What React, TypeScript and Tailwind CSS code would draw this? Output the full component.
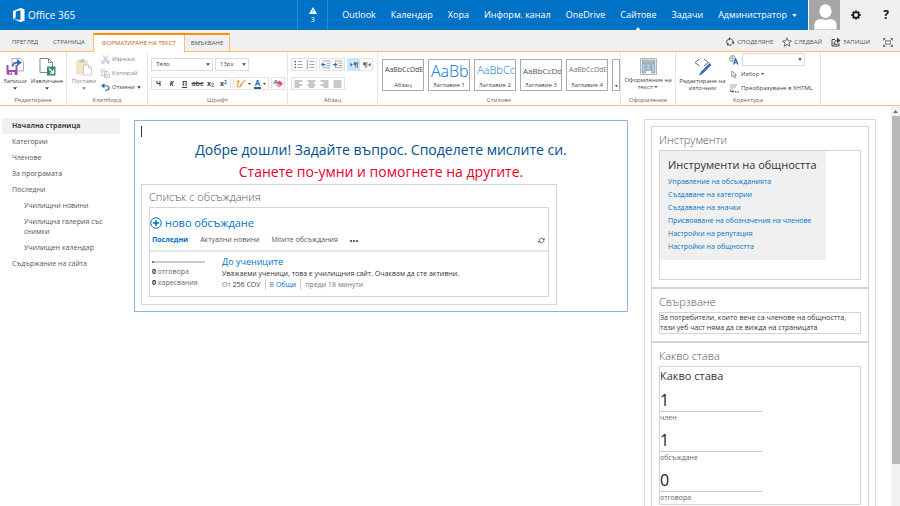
import type { ReactNode } from "react";
import clsx from "clsx";

const navItems = ["Outlook", "Календар", "Хора", "Информ. канал", "OneDrive", "Сайтове", "Задачи"];

const sideLinks = [
  { label: "Начална страница", active: true },
  { label: "Категории" },
  { label: "Членове" },
  { label: "За програмата" },
  { label: "Последни" },
  { label: "Училищни новини", nested: true },
  { label: "Училищна галерия със снимки", nested: true },
  { label: "Училищен календар", nested: true },
  { label: "Съдържание на сайта" },
];

const textStyles = [
  { name: "Абзац", sample: "AaBbCcDdE", look: "text-[7px] text-[#444]" },
  { name: "Заглавие 1", sample: "AaBb", look: "text-[16px] font-light text-[#0072c6]" },
  { name: "Заглавие 2", sample: "AaBbCc", look: "text-[11px] font-light text-[#0072c6]" },
  { name: "Заглавие 3", sample: "AaBbCcDd", look: "text-[8px] text-[#555]" },
  { name: "Заглавие 4", sample: "AaBbCcDdE", look: "text-[7px] text-[#777]" },
];

const toolLinks = [
  "Управление на обсъжданията",
  "Създаване на категории",
  "Създаване на значки",
  "Присвояване на обозначения на членове",
  "Настройки на репутация",
  "Настройки на общността",
];

const stats = [
  { value: 1, label: "член" },
  { value: 1, label: "обсъждане" },
  { value: 0, label: "отговора" },
];

function Caret({ className }: { className?: string }) {
  return (
    <svg viewBox="0 0 6 4" className={clsx("shrink-0", className ?? "h-[3px] w-[4px]")} aria-hidden="true">
      <path d="M0 0h6L3 4z" fill="currentColor" />
    </svg>
  );
}

function OfficeLogo() {
  return (
    <svg viewBox="0 0 24 28" className="h-[14px] w-[12px]" aria-hidden="true">
      <path d="M0 6 15 0l8 2.5v23L15 28 0 22l15 2V4.6L5.4 7v12.4L0 22z" fill="#fff" />
    </svg>
  );
}

function Avatar() {
  return (
    <svg viewBox="0 0 32 30" className="h-[30px] w-[32px] border-l border-white bg-[#a6a6a6]" role="img" aria-label="Администратор">
      <ellipse cx="17" cy="11" rx="6.3" ry="7" fill="#fff" />
      <path d="M5.500 30v-4q0-7 7-7h1q3.500 2 7 0h1q7 0 7 7v4z" fill="#fff" />
    </svg>
  );
}

function GearIcon() {
  return (
    <svg viewBox="0 0 20 20" className="h-[10px] w-[10px]" aria-hidden="true">
      <circle cx="10" cy="10" r="5.600" fill="none" stroke="#111" strokeWidth="3" />
      <g stroke="#111" strokeWidth="3.600">
        <path d="M10 .8v3M10 16.200v3M.8 10h3M16.200 10h3M3.500 3.500l2.100 2.100M14.400 14.400l2.100 2.100M3.500 16.500l2.100-2.100M14.400 5.600l2.100-2.100" />
      </g>
    </svg>
  );
}

function CycleIcon({ className }: { className: string }) {
  return (
    <svg viewBox="0 0 20 20" className={className} fill="none" stroke="#444" strokeWidth="2" aria-hidden="true">
      <path d="M4 12.500A6.500 6.500 0 0 1 9 3.600M12.500 4A6.500 6.500 0 0 1 16 12M13.500 15.600a6.500 6.500 0 0 1-7.500-.5" />
      <path d="m8 .5 4 3-4 3.500zM19 10l-2.500 5L13 11zM7.500 12.500 3 13l2.500 5z" fill="#444" stroke="none" />
    </svg>
  );
}

function RefreshIcon() {
  return (
    <svg viewBox="0 0 16 16" className="h-[7px] w-[7px]" fill="none" stroke="#444" strokeWidth="1.600" aria-hidden="true">
      <path d="M2.500 9A5.500 5 0 0 1 12 4.500M13.500 7A5.500 5 0 0 1 4 11.500" />
      <path d="M15 2v5h-5zM1 14V9h5z" fill="#444" stroke="none" />
    </svg>
  );
}

function StarIcon() {
  return (
    <svg viewBox="0 0 20 20" className="h-[10px] w-[10px]" fill="none" stroke="#444" strokeWidth="1.500" aria-hidden="true">
      <path d="m10 1.500 2.400 6.200 6.600.3-5.200 4.100 1.800 6.400-5.600-3.700-5.600 3.700 1.800-6.400L1 8l6.600-.3z" />
    </svg>
  );
}

function SyncIcon() {
  return (
    <svg viewBox="0 0 20 20" className="h-[10px] w-[10px]" fill="none" stroke="#444" strokeWidth="2" aria-hidden="true">
      <path d="M8 5H2v13h14v-6M6 14c0-5 3-7 7-7" />
      <path d="m12 1 7 6-7 6z" fill="#444" stroke="none" />
      <path d="M5 14.500h8" />
    </svg>
  );
}

function FocusIcon() {
  return (
    <svg viewBox="0 0 20 18" className="h-[9px] w-[10px]" fill="none" stroke="#555" strokeWidth="1.500" aria-hidden="true">
      <path d="M5.500 5.500h9v7h-9zM1 5V1h4M15 1h4v4M19 13v4h-4M5 17H1v-4" />
      <path d="m1 1 4 4M19 1l-4 4M19 17l-4-4M1 17l4-4" />
    </svg>
  );
}

function SaveIcon() {
  return (
    <svg viewBox="0 0 36 36" className="h-[18px] w-[18px]" aria-hidden="true">
      <path d="M12 1h17l6 6v19H12z" fill="#fff" stroke="#999" strokeWidth="1.500" />
      <path d="M1 14h22v20H4l-3-3z" fill="#9b4fb5" />
      <path d="M5 14h14v10H5zM7 28h10v6H7z" fill="#fff" />
      <path d="M9 29h3v5H9z" fill="#9b4fb5" />
      <path d="M11 17q1-9 11-10V2l10 7-10 7v-5q-6 0-7 6z" fill="#2f70b8" />
    </svg>
  );
}

function CheckOutIcon() {
  return (
    <svg viewBox="0 0 34 36" className="h-[18px] w-[17px]" aria-hidden="true">
      <path d="M2 1h17l8 8v20H2z" fill="#fff" stroke="#777" strokeWidth="1.800" />
      <path d="M19 1v8h8" fill="none" stroke="#777" strokeWidth="1.800" />
      <path d="M16 17h17v18H16z" fill="#39876b" />
      <path d="m20 21 8 8m1-6v7h-7" fill="none" stroke="#fff" strokeWidth="2.500" />
    </svg>
  );
}

function PasteIcon() {
  return (
    <svg viewBox="0 0 36 36" className="h-[18px] w-[18px]" aria-hidden="true">
      <path d="M2 5h24v28H2z" fill="#f4e3c3" />
      <path d="M8 3h3q3-4 6 0h3v6H8z" fill="#c9c9c9" />
      <path d="M17 14h10l6 6v14H17z" fill="#fff" stroke="#bbb" strokeWidth="1.500" />
      <path d="M27 14v6h6" fill="none" stroke="#bbb" strokeWidth="1.500" />
    </svg>
  );
}

function CutIcon() {
  return (
    <svg viewBox="0 0 18 18" className="h-[9px] w-[9px]" fill="none" aria-hidden="true">
      <path d="M4 1l8 11M14 1 6 12" stroke="#aaa" strokeWidth="1.800" />
      <circle cx="4" cy="14" r="2.700" stroke="#8fb4dc" strokeWidth="1.600" />
      <circle cx="14" cy="14" r="2.700" stroke="#8fb4dc" strokeWidth="1.600" />
    </svg>
  );
}

function CopyIcon() {
  return (
    <svg viewBox="0 0 18 18" className="h-[9px] w-[9px]" fill="#fff" stroke="#b0b0b0" strokeWidth="1.300" aria-hidden="true">
      <path d="M1 1h6l3 3v9H1zM7 5h6l4 4v8H7z" />
      <path d="M9 11h6M9 14h6M3 5h3M3 8h3" stroke="#a9c4e4" />
    </svg>
  );
}

function UndoIcon() {
  return (
    <svg viewBox="0 0 18 16" className="h-[8px] w-[9px]" fill="none" aria-hidden="true">
      <path d="M3 5.500h8q5 0 5 4t-5 5H8" stroke="#2f70b8" strokeWidth="2.400" />
      <path d="M7 0 0 5.500 7 11z" fill="#2f70b8" />
    </svg>
  );
}

function HighlightIcon() {
  return (
    <svg viewBox="0 0 20 18" className="h-[9px] w-[10px]" fill="none" aria-hidden="true">
      <path d="M1 6q6-5 5-1T2 12q0 4 4 4t6-4" stroke="#f0a345" strokeWidth="2.200" />
      <path d="m18 1 1 2-9 10-3 1 1-3z" fill="#e09a4a" />
    </svg>
  );
}

function EraserIcon() {
  return (
    <svg viewBox="0 0 20 18" className="h-[9px] w-[10px]" aria-hidden="true">
      <path d="m1 10 5-8 5 8M3 7h6" fill="none" stroke="#666" strokeWidth="1.800" />
      <path d="m13 3 7 6-8 8-7-6z" fill="#e0526a" />
      <path d="m8.500 8.500 6 5-2.500 2.500-6-5z" fill="#f5b7c1" />
    </svg>
  );
}

function ListIcon({ numbered }: { numbered?: boolean }) {
  return (
    <svg viewBox="0 0 18 18" className="h-[9px] w-[9px]" aria-hidden="true">
      <path d="M7 3h10M7 9h10M7 15h10" stroke="#888" strokeWidth="1.500" />
      {numbered ? (
        <path d="M2.500 0v5M2.500 6.500v5M2.500 13v5" stroke="#2f70b8" strokeWidth="1.500" />
      ) : (
        <path d="M1 1.500h3v3H1zM1 7.500h3v3H1zM1 13.500h3v3H1z" fill="#2f70b8" />
      )}
    </svg>
  );
}

function IndentIcon({ out }: { out?: boolean }) {
  return (
    <svg viewBox="0 0 20 18" className="h-[9px] w-[10px]" aria-hidden="true">
      <path d="M3 2h16M11 6.500h8M11 11h8M3 15.500h16" stroke="#888" strokeWidth="1.500" />
      <path d={out ? "M0 9l5-4.500V8h4v2.500H5V14z" : "M9 9 4 4.500V8H0v2.500h4V14z"} fill="#2f70b8" />
    </svg>
  );
}

function DirectionIcon({ rtl }: { rtl?: boolean }) {
  return (
    <svg viewBox="0 0 20 18" className="h-[8px] w-[9px]" aria-hidden="true">
      <path d={rtl ? "M19 4v9l-5-4.500z" : "M1 4v9l5-4.500z"} fill="#1f5fa8" />
      <path d={rtl ? "M7 4v11M10.500 4v11M3 4h9" : "M13 4v11M16.500 4v11M9 4h10"} stroke="#555" strokeWidth="1.600" fill="none" />
      <circle cx={rtl ? 5 : 11} cy="6.500" r="2.800" fill="#555" />
    </svg>
  );
}

const alignPaths = {
  left: "M1 2h16M1 6h10M1 10h16M1 14h10",
  center: "M1 2h16M4 6h10M1 10h16M4 14h10",
  right: "M1 2h16M7 6h10M1 10h16M7 14h10",
  justify: "M1 2h16M1 6h16M1 10h16M1 14h16",
};

function AlignIcon({ kind }: { kind: keyof typeof alignPaths }) {
  return (
    <svg viewBox="0 0 18 16" className="h-[8px] w-[9px]" aria-hidden="true">
      <path d={alignPaths[kind]} stroke="#777" strokeWidth="1.600" />
    </svg>
  );
}

function LayoutIcon() {
  return (
    <svg viewBox="0 0 34 34" className="h-[17px] w-[17px]" aria-hidden="true">
      <path d="M1 1h32v32H1z" fill="#fff" stroke="#999" strokeWidth="1.500" />
      <path d="M4 4h26v5H4zM4 11h7v19H4zM13 11h8v14h-8zM23 11h7v19h-7z" fill="#a9c6df" stroke="#777" />
    </svg>
  );
}

function SourceIcon() {
  return (
    <svg viewBox="0 0 36 36" className="h-[18px] w-[18px]" fill="none" aria-hidden="true">
      <path d="M11 2 2 9l9 7M20 2l9 7-9 7" stroke="#666" strokeWidth="2" />
      <path d="m33 12-18 18" stroke="#2f70b8" strokeWidth="5" />
      <path d="m13 28 4 4-7 3z" fill="#2f70b8" />
    </svg>
  );
}

function LanguageIcon() {
  return (
    <svg viewBox="0 0 20 20" className="h-[10px] w-[10px]" fill="none" aria-hidden="true">
      <circle cx="7" cy="7" r="6" stroke="#888" strokeWidth="1.500" />
      <path d="M1 7h12M7 1v12M3 4h8M3 10h8" stroke="#888" />
      <path d="m9 19 4.500-11L18 19M11 15.500h5" stroke="#1f5fa8" strokeWidth="2.200" />
    </svg>
  );
}

function CursorIcon() {
  return (
    <svg viewBox="0 0 14 18" className="mx-[2px] h-[9px] w-[6px]" aria-hidden="true">
      <path d="M2 1v13l3.500-3L8 17l3-1.500L8.500 10H13z" fill="#fff" stroke="#555" strokeWidth="1.500" />
    </svg>
  );
}

function ConvertIcon() {
  return (
    <svg viewBox="0 0 20 18" className="h-[9px] w-[10px]" aria-hidden="true">
      <path d="M2 2h14M2 6h12M2 10h6" stroke="#999" strokeWidth="1.800" />
      <path d="M3 12v3h5" stroke="#2f70b8" strokeWidth="2" fill="none" />
      <path d="m7 12 4 3-4 3z" fill="#2f70b8" />
      <path d="M12 16h2M15 16h2M18 16h2" stroke="#333" strokeWidth="2" />
    </svg>
  );
}

function RibbonGroup({ label, className, children }: { label: string; className?: string; children: ReactNode }) {
  return (
    <section className={clsx("flex shrink-0 flex-col border-r border-[#e6e6e6]", className)}>
      <div className="flex h-[43px] items-start">{children}</div>
      <h2 className="text-center text-[6px] leading-[10px] text-[#666]">{label}</h2>
    </section>
  );
}

function BigButton({ icon, children, className }: { icon: ReactNode; children: ReactNode; className?: string }) {
  return (
    <button type="button" className={clsx("mt-[6px] flex flex-col items-center gap-[2px] text-[6px] leading-[7px]", className)}>
      {icon}
      {children}
    </button>
  );
}

function SmallButton({ icon, children, disabled }: { icon: ReactNode; children: ReactNode; disabled?: boolean }) {
  return (
    <button
      type="button"
      disabled={disabled}
      className={clsx("flex h-[14px] items-center gap-[2px] whitespace-nowrap text-[6px]", disabled && "text-[#888]")}
    >
      {icon}
      {children}
    </button>
  );
}

function ToolBox({ children }: { children: ReactNode }) {
  return <div className="flex h-[13px] items-stretch border border-[#e1e1e1]">{children}</div>;
}

function Tool({ label, className, pressed, children }: { label: string; className?: string; pressed?: boolean; children: ReactNode }) {
  return (
    <button
      type="button"
      aria-label={label}
      className={clsx(
        "flex min-w-[12px] items-center justify-center gap-[2px] text-[7px] leading-none",
        pressed && "bg-[#cde6f7]",
        className
      )}
    >
      {children}
    </button>
  );
}

function Picker({ label, options, className }: { label: string; options: string[]; className: string }) {
  return (
    <div className={clsx("relative h-[13px]", className)}>
      <select aria-label={label} className="block h-full w-full appearance-none border border-[#dcdcdc] bg-white pl-[4px] text-[6px]">
        {options.map((o) => (
          <option key={o}>{o}</option>
        ))}
      </select>
      <Caret className="pointer-events-none absolute top-[5px] right-[3px] h-[3px] w-[4px]" />
    </div>
  );
}

function Header() {
  return (
    <header className="flex h-[30px] shrink-0 items-stretch bg-[#0072c6] text-white">
      <a href="#" className="flex flex-1 items-center gap-[3px] pl-[13px] text-[10px] font-medium">
        <OfficeLogo />
        Office 365
      </a>
      <button type="button" aria-label="Известия" className="flex w-[31px] flex-col items-center justify-center gap-[2px] border-x border-[#2a8ad4] text-[7px] leading-[8px]">
        <svg viewBox="0 0 16 14" className="h-[7px] w-[8px]" aria-hidden="true">
          <path d="M8 0l8 14H0z" fill="#fff" />
          <path d="M8 5v4M8 10.500v2" stroke="#0072c6" strokeWidth="1.500" />
        </svg>
        3
      </button>
      <nav className="flex items-stretch gap-[15px] pl-[14px] text-[9px]">
        {navItems.map((item) => (
          <a key={item} href="#" className="relative flex items-center">
            {item}
            {item === "Сайтове" && (
              <Caret className="absolute bottom-0 left-1/2 h-[3px] w-[6px] -translate-x-1/2 rotate-180" />
            )}
          </a>
        ))}
        <button type="button" className="flex items-center gap-[5px] pr-[11px]">
          Администратор
          <Caret className="h-[3px] w-[5px]" />
        </button>
      </nav>
      <Avatar />
      <div className="flex w-[60px] items-center justify-around bg-[#f0f0f0] text-[#111]">
        <button type="button" aria-label="Настройки">
          <GearIcon />
        </button>
        <button type="button" aria-label="Помощ" className="text-[12px] font-bold">
          ?
        </button>
      </div>
    </header>
  );
}

function TabBar() {
  return (
    <div className="flex h-[22px] shrink-0 items-stretch border-b border-[#fdbf6d] bg-[#f0f0f0] pt-[3px] text-[6px] text-[#555]">
      <button type="button" className="pr-[7px] pl-[12px]">ПРЕГЛЕД</button>
      <button type="button" className="px-[8px]">СТРАНИЦА</button>
      <div className="-mb-px flex items-stretch border-x border-t-2 border-[#fdbf6d] border-t-[#ff8f00]">
        <button type="button" className="bg-white px-[8px] text-[#c55a1d]">ФОРМАТИРАНЕ НА ТЕКСТ</button>
        <button type="button" className="mb-px border-l border-[#fdbf6d] px-[6px]">ВМЪКВАНЕ</button>
      </div>
      <div className="ml-auto flex items-center gap-[9px] pr-[7px]">
        <button type="button" className="flex items-center gap-[2px]">
          <CycleIcon className="h-[10px] w-[10px]" />
          СПОДЕЛЯНЕ
        </button>
        <button type="button" className="flex items-center gap-[2px]">
          <StarIcon />
          СЛЕДВАЙ
        </button>
        <button type="button" className="flex items-center gap-[2px]">
          <SyncIcon />
          ЗАПИШИ
        </button>
        <button type="button" aria-label="Фокус върху съдържанието" className="ml-[4px]">
          <FocusIcon />
        </button>
      </div>
    </div>
  );
}

function Ribbon() {
  return (
    <div className="flex h-[54px] shrink-0 border-b border-[#fdbf6d] bg-white text-[#444]">
      <RibbonGroup label="Редактиране" className="w-[67px]">
        <BigButton icon={<SaveIcon />} className="w-[30px]">
          Запиши
          <Caret />
        </BigButton>
        <BigButton icon={<CheckOutIcon />} className="w-[34px]">
          Извличане
          <Caret />
        </BigButton>
      </RibbonGroup>

      <RibbonGroup label="Клипборд" className="w-[81px]">
        <BigButton icon={<PasteIcon />} className="w-[34px] text-[#888]">
          Постави
          <Caret />
        </BigButton>
        <div>
          <SmallButton icon={<CutIcon />} disabled>Изрежи</SmallButton>
          <SmallButton icon={<CopyIcon />} disabled>Копирай</SmallButton>
          <SmallButton icon={<UndoIcon />}>
            Отмени
            <Caret />
          </SmallButton>
        </div>
      </RibbonGroup>

      <RibbonGroup label="Шрифт" className="w-[140px] px-[3px]">
        <div className="mt-[6px] flex flex-col gap-[6px]">
          <div className="flex gap-[2px]">
            <Picker label="Шрифт" options={["Тяло"]} className="w-[62px]" />
            <Picker label="Размер на шрифта" options={["13px"]} className="w-[34px]" />
          </div>
          <div className="flex gap-[2px]">
            <ToolBox>
              <Tool label="Получер" className="w-[13px] font-bold">Ч</Tool>
              <Tool label="Курсив" className="w-[13px] font-bold italic">К</Tool>
              <Tool label="Подчертан" className="w-[13px] font-bold underline">П</Tool>
              <Tool label="Зачертан" className="w-[13px] text-[6px] font-semibold line-through">abc</Tool>
              <Tool label="Долен индекс" className="w-[13px] font-bold">
                <span>x<sub className="text-[5px] text-[#2f70b8]">2</sub></span>
              </Tool>
              <Tool label="Горен индекс" className="w-[13px] font-bold">
                <span>x<sup className="text-[5px] text-[#2f70b8]">2</sup></span>
              </Tool>
            </ToolBox>
            <ToolBox>
              <Tool label="Цвят за осветяване" className="w-[18px]">
                <HighlightIcon />
                <Caret className="h-[2px] w-[3px]" />
              </Tool>
              <Tool label="Цвят на шрифта" className="w-[16px]">
                <span className="border-b-2 border-[#1f5fa8] px-[1px] text-[8px] leading-[8px] font-bold text-[#2f5f98]">A</span>
                <Caret className="h-[2px] w-[3px]" />
              </Tool>
            </ToolBox>
            <ToolBox>
              <Tool label="Изчистване на форматирането">
                <EraserIcon />
              </Tool>
            </ToolBox>
          </div>
        </div>
      </RibbonGroup>

      <RibbonGroup label="Абзац" className="w-[90px] px-[3px]">
        <div className="mt-[6px] flex flex-col items-start gap-[6px]">
          <div className="flex gap-[2px]">
            <ToolBox>
              <Tool label="Водещи символи"><ListIcon /></Tool>
              <Tool label="Номериране"><ListIcon numbered /></Tool>
            </ToolBox>
            <ToolBox>
              <Tool label="Намаляване на отстъпа"><IndentIcon out /></Tool>
              <Tool label="Увеличаване на отстъпа"><IndentIcon /></Tool>
            </ToolBox>
            <ToolBox>
              <Tool label="Отляво надясно" pressed><DirectionIcon /></Tool>
              <Tool label="Отдясно наляво"><DirectionIcon rtl /></Tool>
            </ToolBox>
          </div>
          <ToolBox>
            <Tool label="Подравняване отляво" className="w-[13px]"><AlignIcon kind="left" /></Tool>
            <Tool label="Центриране" className="w-[13px]"><AlignIcon kind="center" /></Tool>
            <Tool label="Подравняване отдясно" className="w-[13px]"><AlignIcon kind="right" /></Tool>
            <Tool label="Двустранно подравняване" className="w-[13px]"><AlignIcon kind="justify" /></Tool>
          </ToolBox>
        </div>
      </RibbonGroup>

      <RibbonGroup label="Стилове" className="w-[243px]">
        <div className="mt-[7px] flex gap-[4px] pl-[4px]">
          {textStyles.map((s) => (
            <button key={s.name} type="button" className="flex h-[32px] w-[42px] flex-col overflow-hidden border border-[#ababab]">
              <span className={clsx("flex h-[21px] items-center pl-[2px] whitespace-nowrap", s.look)}>{s.sample}</span>
              <span className="w-full text-center text-[6px] leading-[8px]">{s.name}</span>
            </button>
          ))}
          <button type="button" aria-label="Още стилове" className="flex h-[32px] w-[8px] items-end justify-center border border-[#ababab] pb-[3px]">
            <Caret className="h-[2px] w-[3px]" />
          </button>
        </div>
      </RibbonGroup>

      <RibbonGroup label="Оформление" className="w-[55px]">
        <BigButton icon={<LayoutIcon />} className="w-full">
          <span>
            Оформление на
            <br />
            текст <Caret className="inline h-[2px] w-[4px]" />
          </span>
        </BigButton>
      </RibbonGroup>

      <RibbonGroup label="Коректура" className="w-[145px]">
        <BigButton icon={<SourceIcon />} className="w-[53px]">
          <span>
            Редактиране на
            <br />
            източник
          </span>
        </BigButton>
        <div>
          <div className="flex h-[15px] items-center gap-[3px]">
            <LanguageIcon />
            <Picker label="Език" options={[""]} className="w-[63px]" />
          </div>
          <SmallButton icon={<CursorIcon />}>
            Избор
            <Caret className="h-[2px] w-[3px]" />
          </SmallButton>
          <SmallButton icon={<ConvertIcon />}>Преобразуване в XHTML</SmallButton>
        </div>
      </RibbonGroup>
    </div>
  );
}

function SideNav() {
  return (
    <nav className="w-[134px] shrink-0 pt-[12px] pr-[14px] pl-[2px] text-[7px] text-[#555]">
      <ul>
        {sideLinks.map((link) => (
          <li key={link.label}>
            <a
              href="#"
              className={clsx(
                "block py-[3px] leading-[10px]",
                link.nested ? "pl-[22px]" : "pl-[10px]",
                link.active && "bg-[#f0f0f0] font-bold text-[#444]"
              )}
            >
              {link.label}
            </a>
          </li>
        ))}
      </ul>
    </nav>
  );
}

function DiscussionList() {
  return (
    <section className="mt-px mr-[64px] border border-[#d4d4d4] px-[7px] pb-[7px]">
      <h2 className="pt-[3px] pb-px text-[11px] leading-[18px] font-light text-[#555]">Списък с обсъждания</h2>
      <div className="border border-[#d4d4d4]">
        <a href="#" className="flex items-center gap-[3px] pt-[7px] text-[11px] leading-[16px] text-[#0072c6]">
          <svg viewBox="0 0 24 24" className="h-[12px] w-[12px]" fill="none" stroke="#0072c6" strokeWidth="2" aria-hidden="true">
            <circle cx="12" cy="12" r="10.500" />
            <path d="M12 6v12M6 12h12" strokeWidth="3" />
          </svg>
          ново обсъждане
        </a>
        <div className="flex h-[21px] items-center gap-[12px] border-b-2 border-[#e4e4e4] pr-[3px] pl-[2px] text-[7px] text-[#555]">
          <a href="#" className="font-bold text-[#0072c6]">Последни</a>
          <a href="#">Актуални новини</a>
          <a href="#">Моите обсъждания</a>
          <button type="button" aria-label="Още" className="flex gap-[1px]">
            <span className="size-[2px] rounded-full bg-[#333]" />
            <span className="size-[2px] rounded-full bg-[#333]" />
            <span className="size-[2px] rounded-full bg-[#333]" />
          </button>
          <button type="button" aria-label="Обновяване" className="ml-auto">
            <RefreshIcon />
          </button>
        </div>
        <article className="flex pt-[4px] pb-[6px] pl-[2px] text-[7px] leading-[11px] text-[#333]">
          <div className="w-[70px] text-[#666]">
            <div className="mt-[5px] mb-[3px] h-[2px] w-[53px] border-l-2 border-[#777] bg-[#ccc]" />
            <p><b className="text-[#222]">0</b> отговора</p>
            <p><b className="text-[#222]">0</b> харесвания</p>
          </div>
          <div>
            <h3 className="text-[9px] leading-[12px]">
              <a href="#" className="text-[#0072c6]">До учениците</a>
            </h3>
            <p>Уважаеми ученици, това е училищния сайт. Очаквам да сте активни.</p>
            <p className="flex text-[#777]">
              <span className="border-r border-[#ccc] pr-[4px]">От <span className="text-[#444]">256 СОУ</span></span>
              <span className="border-r border-[#ccc] px-[4px]">В <a href="#" className="text-[#0072c6]">Общи</a></span>
              <span className="pl-[4px]">преди 18 минути</span>
            </p>
          </div>
        </article>
      </div>
    </section>
  );
}

function Editor() {
  return (
    <main className="mt-[14px] min-w-0 flex-1 self-start border border-[#8eb0e8] px-[6px] pt-[5px] pb-[6px]">
      <div className="mb-[2px] h-[11px] w-px bg-[#333]" />
      <div className="text-center text-[14px] leading-[22px]">
        <p className="text-[#00508f]">Добре дошли! Задайте въпрос. Споделете мислите си.</p>
        <p className="text-[#e6002e]">Станете по-умни и помогнете на другите.</p>
      </div>
      <DiscussionList />
    </main>
  );
}

function WebPart({ title, children }: { title: string; children: ReactNode }) {
  return (
    <section className="border-b-2 border-[#d4d4d4] px-[7px] pb-[7px] last:border-b-0">
      <h2 className="pt-[4px] text-[11px] leading-[18px] font-light text-[#555]">{title}</h2>
      <div className="mt-[1px] border border-[#d4d4d4]">{children}</div>
    </section>
  );
}

function SidePanel() {
  return (
    <aside className="mr-[15px] ml-[16px] mt-[13px] w-[232px] shrink-0 border border-b-0 border-[#d8d8d8] p-[6px] pb-0 text-[7px] text-[#333]">
      <div className="border border-b-0 border-[#d4d4d4]">
        <WebPart title="Инструменти">
          <div className="mr-[34px] mb-[19px] bg-[#f0f0f0] pt-[6px] pb-[7px] pl-[8px]">
            <h3 className="mb-[3px] text-[11px] leading-[15px] text-[#333]">Инструменти на общността</h3>
            <ul className="leading-[13px] whitespace-nowrap text-[#0072c6]">
              {toolLinks.map((t) => (
                <li key={t}>
                  <a href="#">{t}</a>
                </li>
              ))}
            </ul>
          </div>
        </WebPart>
        <WebPart title="Свързване">
          <p className="leading-[10px]">За потребители, които вече са членове на общността, тази уеб част няма да се вижда на страницата</p>
        </WebPart>
        <WebPart title="Какво става">
          <h3 className="text-[11px] leading-[17px] text-[#333]">Какво става</h3>
          <dl className="w-[102px]">
            {stats.map((s) => (
              <div key={s.label} className="flex flex-col-reverse">
                <dt className="h-[12px] leading-[12px] text-[#666]">{s.label}</dt>
                <dd className="border-b border-[#c8c8c8] pt-[5px] text-[16px] leading-[22px] text-[#222]">{s.value}</dd>
              </div>
            ))}
          </dl>
        </WebPart>
      </div>
    </aside>
  );
}

function ScrollBar() {
  return (
    <div className="flex w-[9px] shrink-0 flex-col items-center bg-[#f1f1f1]" aria-hidden="true">
      <div className="flex h-[10px] items-center text-[#666]">
        <Caret className="h-[3px] w-[5px] rotate-180" />
      </div>
      <div className="h-[87%] w-[8px] bg-[#b8b8b8]" />
    </div>
  );
}

export default function App() {
  return (
    <div className="flex h-screen flex-col overflow-hidden bg-white font-['Open_Sans','Noto_Sans',sans-serif]">
      <Header />
      <TabBar />
      <Ribbon />
      <div className="flex min-h-0 flex-1 overflow-hidden">
        <SideNav />
        <Editor />
        <SidePanel />
        <ScrollBar />
      </div>
    </div>
  );
}
